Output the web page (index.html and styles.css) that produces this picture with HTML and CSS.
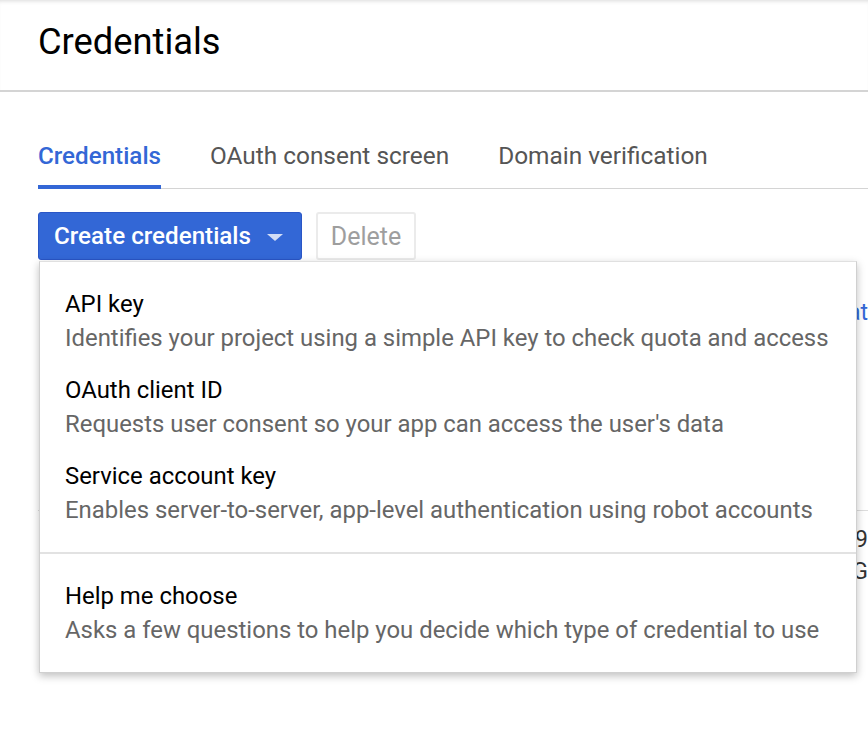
FILE: index.html
```html
<!DOCTYPE html>
<html lang="en">
<head>
<meta charset="utf-8">
<title>Credentials</title>
<link rel="stylesheet" href="styles.css">
</head>
<body>
<header class="page-header">
  <h1 class="page-title">Credentials</h1>
</header>
<main class="main">
  <nav class="tabs">
    <a class="tab tab-active">Credentials</a>
    <a class="tab">OAuth consent screen</a>
    <a class="tab">Domain verification</a>
  </nav>
  <div class="toolbar">
    <div class="dropdown">
      <button class="btn btn-primary">Create credentials <span class="caret"></span></button>
      <div class="menu">
        <div class="menu-group">
          <div class="menu-item">
            <div class="item-title">API key</div>
            <div class="item-desc">Identifies your project using a simple API key to check quota and access</div>
          </div>
          <div class="menu-item">
            <div class="item-title">OAuth client ID</div>
            <div class="item-desc">Requests user consent so your app can access the user's data</div>
          </div>
          <div class="menu-item">
            <div class="item-title">Service account key</div>
            <div class="item-desc">Enables server-to-server, app-level authentication using robot accounts</div>
          </div>
        </div>
        <div class="menu-group">
          <div class="menu-item">
            <div class="item-title">Help me choose</div>
            <div class="item-desc">Asks a few questions to help you decide which type of credential to use</div>
          </div>
        </div>
      </div>
    </div>
    <button class="btn btn-disabled">Delete</button>
  </div>
  <section class="content">
    <div class="intro"><span class="intro-spacer"></span><a class="link">at</a></div>
    <div class="table">
      <div class="table-row"><span class="cell-spacer"></span><span class="cell"><span class="cell-mark">I</span>9</span></div>
      <div class="table-row"><span class="cell-spacer"></span><span class="cell">G</span></div>
    </div>
  </section>
</main>
</body>
</html>
```

FILE: styles.css
```css
* { box-sizing: border-box; }
html, body { margin: 0; padding: 0; }
body {
  font-family: Roboto, "Liberation Sans", Arial, sans-serif;
  background: #fff;
  color: #212121;
  width: 868px;
  height: 734px;
  overflow: hidden;
}
.page-header {
  height: 92px;
  padding-left: 38px;
  border-bottom: 2px solid #d4d4d4;
  box-shadow: inset 0 4px 4px -3px rgba(0,0,0,0.15);
  display: flex;
  align-items: flex-start;
}
.page-title {
  margin: 21px 0 0;
  font-size: 36.3px;
  font-weight: 400;
  line-height: 42px;
  color: #000;
}
.main {
  padding-left: 38px;
}
.tabs {
  display: flex;
  gap: 49px;
  margin-top: 42px;
  border-bottom: 1px solid #d4d4d4;
}
.tab {
  font-size: 24.4px;
  line-height: 30px;
  color: #555;
  padding: 7px 0 17px;
  cursor: pointer;
}
.tab-active {
  color: #3367d6;
  font-weight: 500;
  border-bottom: 4px solid #3367d6;
  margin-bottom: -1px;
  padding-bottom: 14px;
  font-size: 24.2px;
}
.toolbar {
  display: flex;
  gap: 14px;
  margin-top: 23px;
}
.dropdown { position: relative; }
.btn {
  font-family: Roboto, "Liberation Sans", Arial, sans-serif;
  height: 48px;
  border-radius: 3px;
  font-size: 24.2px;
  padding: 0 15px;
  display: flex;
  align-items: center;
}
.btn-primary {
  background: #3367d6;
  color: #fff;
  border: 1px solid #2a56c6;
  font-weight: 500;
  width: 264px;
  gap: 16px;
}
.caret {
  width: 0; height: 0;
  border-left: 8px solid transparent;
  border-right: 8px solid transparent;
  border-top: 7px solid #d2ddf6;
  margin-top: 2px;
}
.btn-disabled {
  background: #fff;
  color: #9e9e9e;
  border: 2px solid #ebebeb;
  width: 100px;
  justify-content: center;
  padding: 0;
  font-size: 25px;
}
.menu {
  position: absolute;
  top: 49px;
  left: 1px;
  width: 818px;
  background: #fff;
  border: 1px solid #d0d0d0;
  border-top: 1px solid #e0e0e0;
  box-shadow: 0 3px 8px rgba(0,0,0,0.25);
  z-index: 10;
}
.menu-group {
  padding: 25px 0 25px 25px;
  display: flex;
  flex-direction: column;
  gap: 18px;
}
.menu-group + .menu-group {
  border-top: 2px solid #e2e2e2;
  padding-top: 25px;
}
.item-title {
  font-size: 23.9px;
  line-height: 34px;
  color: #000;
}
.item-desc {
  font-size: 23.9px;
  line-height: 34px;
  color: #666;
  white-space: nowrap;
}
.content {
  margin-top: 38px;
  white-space: nowrap;
}
.intro {
  display: flex;
  font-size: 23px;
  line-height: 30px;
}
.intro-spacer { display: inline-block; width: 815px; }
.link { color: #3367d6; }
.table {
  margin-top: 182px;
  border-top: 1px solid #ddd;
  padding-top: 13px;
}
.table-row {
  display: flex;
  font-size: 23px;
  line-height: 32px;
  color: #333;
}
.cell-spacer { display: inline-block; width: 818px; }
.cell-mark { color: #b71c1c; }
```
